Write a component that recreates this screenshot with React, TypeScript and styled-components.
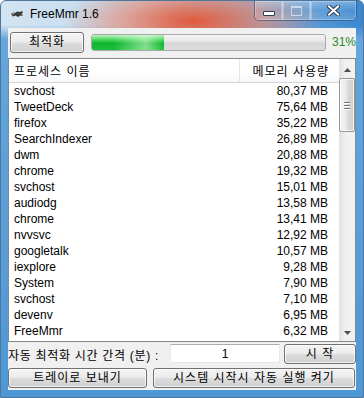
import { FC } from "react";
import styled, { createGlobalStyle } from "styled-components";

const font = `"Liberation Sans", "Noto Sans CJK KR", sans-serif`;

const GlobalStyle = createGlobalStyle`
  html, body {
    margin: 0;
    padding: 0;
  }
  body {
    width: 364px;
    height: 398px;
    overflow: hidden;
    background: #ffffff;
  }
`;

const Window = styled.div`
  width: 364px;
  height: 398px;
  box-sizing: border-box;
  display: flex;
  flex-direction: column;
  border: 1px solid #4f7699;
  border-radius: 6px 6px 0 0;
  overflow: hidden;
  background:
    radial-gradient(ellipse 130px 42px at 192px 20px, rgba(228, 84, 52, 0.95), rgba(236, 132, 104, 0.6) 55%, rgba(236, 160, 140, 0) 100%),
    linear-gradient(180deg, rgba(0, 0, 0, 0) 0px, rgba(0, 0, 0, 0) 24px, #64a6dd 38px, #4e98d6 100%),
    linear-gradient(90deg, #d3e4f2 0%, #bfd8ee 40%, #6aa7dc 75%, #3a86cf 100%);
  font-family: ${font};
  font-size: 12px;
  color: #000;
`;

const TitleBar = styled.div`
  height: 27px;
  display: flex;
  align-items: flex-start;
  flex-shrink: 0;
`;

const TitleIcon = styled.svg`
  margin: 9px 0 0 9px;
  flex-shrink: 0;
`;

const TitleText = styled.span`
  margin: 6px 0 0 6px;
  line-height: 14px;
  font-size: 12px;
  color: #000;
`;

const CaptionGroup = styled.div`
  margin-left: auto;
  margin-right: 6px;
  display: flex;
  height: 19px;
  border: 1px solid rgba(40, 70, 110, 0.55);
  border-top: none;
  border-radius: 0 0 5px 5px;
  overflow: hidden;
`;

const CaptionButton = styled.div<{ $width: number }>`
  width: ${(p) => p.$width}px;
  box-sizing: border-box;
  display: flex;
  align-items: center;
  justify-content: center;
  border-left: 1px solid rgba(255, 255, 255, 0.45);
  background: linear-gradient(180deg, rgba(255, 255, 255, 0.32), rgba(255, 255, 255, 0.08) 50%, rgba(255, 255, 255, 0.18));
  box-shadow: inset 0 0 0 1px rgba(255, 255, 255, 0.25);
  &:first-child {
    border-left: none;
  }
`;

const MinGlyph = styled.div`
  width: 10px;
  height: 3px;
  margin-top: 6px;
  background: #fff;
  border: 1px solid #2d3f55;
  border-radius: 1px;
`;

const MaxGlyph = styled.div`
  width: 9px;
  height: 7px;
  border: 1px solid rgba(255, 255, 255, 0.55);
  border-top-width: 2px;
`;

const Client = styled.div`
  flex: 1;
  margin: 0 7px 7px;
  background: #f0f0f0;
  display: flex;
  flex-direction: column;
`;

const TopRow = styled.div`
  height: 22px;
  margin-top: 3px;
  padding-left: 2px;
  display: flex;
  align-items: center;
`;

const Button = styled.button<{ $width?: number; $height?: number }>`
  box-sizing: border-box;
  width: ${(p) => (p.$width ? `${p.$width}px` : "auto")};
  height: ${(p) => p.$height ?? 21}px;
  padding: 0;
  border: 1px solid #707070;
  border-radius: 3px;
  background: linear-gradient(180deg, #f3f3f3 0%, #ebebeb 48%, #dddddd 52%, #cfcfcf 100%);
  box-shadow: inset 0 0 0 1px rgba(255, 255, 255, 0.75);
  font-family: ${font};
  font-size: 12px;
  letter-spacing: 1px;
  color: #000;
  line-height: 1;
`;

const Progress = styled.div`
  box-sizing: border-box;
  width: 235px;
  height: 17px;
  margin-left: 7px;
  border: 1px solid #a8a8a8;
  border-radius: 3px;
  overflow: hidden;
  background: linear-gradient(180deg, #f4f4f4 0%, #e6e6e6 45%, #d6d6d6 55%, #dedede 100%);
`;

const ProgressFill = styled.div`
  height: 100%;
  background:
    linear-gradient(90deg, rgba(255, 255, 255, 0) 30%, rgba(220, 255, 220, 0.55) 75%, rgba(255, 255, 255, 0) 100%),
    linear-gradient(180deg, #bdf3c3 0%, #4fd862 30%, #0fb42c 55%, #1cc03a 100%);
`;

const Percent = styled.span`
  margin-left: 6px;
  color: #2a8a2a;
  font-size: 12px;
`;

const ListBox = styled.div`
  margin-top: 5px;
  height: 284px;
  box-sizing: border-box;
  border: 1px solid #828790;
  background: #fff;
  display: flex;
`;

const ListMain = styled.div`
  flex: 1;
  display: flex;
  flex-direction: column;
  overflow: hidden;
`;

const HeaderRow = styled.div`
  height: 24px;
  flex-shrink: 0;
  box-sizing: border-box;
  display: grid;
  grid-template-columns: 231px 1fr;
  align-items: center;
  border-bottom: 1px solid #d5d5d5;
  background: linear-gradient(180deg, #ffffff 0%, #ffffff 50%, #f7f8fa 100%);
`;

const HeaderCell = styled.div<{ $right?: boolean }>`
  height: 100%;
  display: flex;
  align-items: center;
  letter-spacing: 1px;
  justify-content: ${(p) => (p.$right ? "flex-end" : "flex-start")};
  padding: ${(p) => (p.$right ? "0 10px 0 0" : "0 0 0 5px")};
  border-right: ${(p) => (p.$right ? "none" : "1px solid #e5e5e5")};
`;

const Row = styled.div`
  height: 16px;
  line-height: 16px;
  display: grid;
  grid-template-columns: 231px 1fr;
  flex-shrink: 0;
`;

const NameCell = styled.span`
  padding-left: 5px;
  white-space: nowrap;
`;

const ValueCell = styled.span`
  text-align: right;
  padding-right: 11px;
  white-space: nowrap;
`;

const ScrollBar = styled.div`
  width: 16px;
  display: flex;
  flex-direction: column;
  background: linear-gradient(90deg, #e2e2e2 0%, #f0f0f0 40%, #f2f2f2 100%);
`;

const ScrollArrow = styled.div<{ $down?: boolean }>`
  height: 17px;
  display: flex;
  align-items: center;
  justify-content: center;
  padding-top: ${(p) => (p.$down ? 0 : 4)}px;
  box-sizing: border-box;
  margin-top: ${(p) => (p.$down ? "auto" : "0")};
`;

const Thumb = styled.div`
  height: 54px;
  margin: 2px 0 0 0;
  box-sizing: border-box;
  border: 1px solid #979797;
  border-radius: 2px;
  background: linear-gradient(90deg, #f4f4f4 0%, #e9e9e9 45%, #d9d9d9 55%, #cfcfcf 100%);
  box-shadow: inset 0 0 0 1px rgba(255, 255, 255, 0.7);
  display: flex;
  flex-direction: column;
  align-items: center;
  justify-content: center;
  gap: 2px;
`;

const GripLine = styled.div`
  width: 6px;
  height: 1px;
  background: #707070;
  box-shadow: 0 1px 0 #ffffff;
`;

const IntervalRow = styled.div`
  height: 23px;
  display: flex;
  align-items: center;
`;

const IntervalLabel = styled.span`
  flex: 1;
  white-space: nowrap;
  padding-top: 1px;
  letter-spacing: 0.7px;
`;

const IntervalInput = styled.div`
  width: 110px;
  height: 19px;
  box-sizing: border-box;
  border: 1px solid #e3e9ef;
  border-top-color: #abadb3;
  background: #fff;
  display: flex;
  align-items: center;
  justify-content: center;
`;

const ButtonRow = styled.div`
  margin-top: 3px;
  display: grid;
  grid-template-columns: 139px 1fr;
  gap: 6px;
  padding-right: 1px;
`;

type Proc = { name: string; mem: string };

const processes: Proc[] = [
  { name: "svchost", mem: "80,37 MB" },
  { name: "TweetDeck", mem: "75,64 MB" },
  { name: "firefox", mem: "35,22 MB" },
  { name: "SearchIndexer", mem: "26,89 MB" },
  { name: "dwm", mem: "20,88 MB" },
  { name: "chrome", mem: "19,32 MB" },
  { name: "svchost", mem: "15,01 MB" },
  { name: "audiodg", mem: "13,58 MB" },
  { name: "chrome", mem: "13,41 MB" },
  { name: "nvvsvc", mem: "12,92 MB" },
  { name: "googletalk", mem: "10,57 MB" },
  { name: "iexplore", mem: "9,28 MB" },
  { name: "System", mem: "7,90 MB" },
  { name: "svchost", mem: "7,10 MB" },
  { name: "devenv", mem: "6,95 MB" },
  { name: "FreeMmr", mem: "6,32 MB" },
];

const usage = 31;

const AppIcon: FC = () => (
  <TitleIcon width="14" height="8" viewBox="0 0 14 8">
    <path d="M1 4 L3 2.5 L5 3 L7 1.5 L10 2 L12 1 L13 2.5 L11.5 4 L13 6 L10.5 5.5 L8 7 L5.5 5.5 L3 6.5 Z" fill="#3a3a3a" />
    <circle cx="3.2" cy="3.8" r="0.8" fill="#d0d0d0" />
  </TitleIcon>
);

const CloseGlyph: FC = () => (
  <svg width="13" height="11" viewBox="0 0 13 11">
    <path d="M2 1.5 L11 9.5 M11 1.5 L2 9.5" stroke="#2d3f55" strokeWidth="4" strokeLinecap="square" />
    <path d="M2 1.5 L11 9.5 M11 1.5 L2 9.5" stroke="#ffffff" strokeWidth="2" strokeLinecap="square" />
  </svg>
);

const Arrow: FC<{ down?: boolean }> = ({ down }) => (
  <svg width="7" height="4" viewBox="0 0 7 4">
    <path d={down ? "M0 0 H7 L3.5 4 Z" : "M0 4 H7 L3.5 0 Z"} fill="#4d4d4d" />
  </svg>
);

const App: FC = () => {
  return (
    <>
      <GlobalStyle />
      <Window>
        <TitleBar>
          <AppIcon />
          <TitleText>FreeMmr 1.6</TitleText>
          <CaptionGroup>
            <CaptionButton $width={27}>
              <MinGlyph />
            </CaptionButton>
            <CaptionButton $width={28}>
              <MaxGlyph />
            </CaptionButton>
            <CaptionButton $width={46}>
              <CloseGlyph />
            </CaptionButton>
          </CaptionGroup>
        </TitleBar>
        <Client>
          <TopRow>
            <Button $width={74}>최적화</Button>
            <Progress>
              <ProgressFill style={{ width: `${usage}%` }} />
            </Progress>
            <Percent>{usage}%</Percent>
          </TopRow>
          <ListBox>
            <ListMain>
              <HeaderRow>
                <HeaderCell>프로세스 이름</HeaderCell>
                <HeaderCell $right>메모리 사용량</HeaderCell>
              </HeaderRow>
              {processes.map((p, i) => (
                <Row key={i}>
                  <NameCell>{p.name}</NameCell>
                  <ValueCell>{p.mem}</ValueCell>
                </Row>
              ))}
            </ListMain>
            <ScrollBar>
              <ScrollArrow>
                <Arrow />
              </ScrollArrow>
              <Thumb>
                <GripLine />
                <GripLine />
                <GripLine />
              </Thumb>
              <ScrollArrow $down>
                <Arrow down />
              </ScrollArrow>
            </ScrollBar>
          </ListBox>
          <IntervalRow>
            <IntervalLabel>자동 최적화 시간 간격 (분) :</IntervalLabel>
            <IntervalInput>1</IntervalInput>
            <Button $width={72} $height={20} style={{ marginLeft: 4 }}>
              시 작
            </Button>
          </IntervalRow>
          <ButtonRow>
            <Button $height={20}>트레이로 보내기</Button>
            <Button $height={20}>시스템 시작시 자동 실행 켜기</Button>
          </ButtonRow>
        </Client>
      </Window>
    </>
  );
};

export default App;
